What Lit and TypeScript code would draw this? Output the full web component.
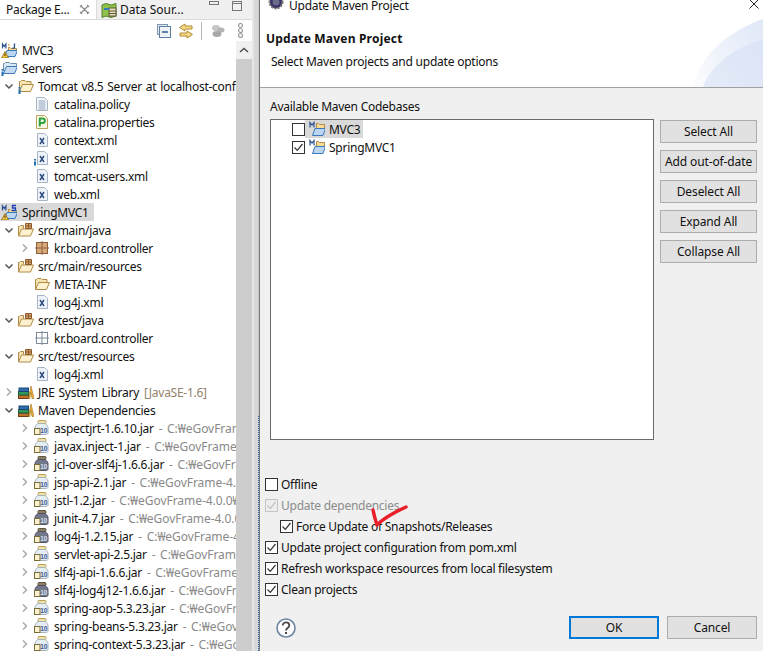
import { LitElement, html, css, svg } from "lit";
import { customElement } from "lit/decorators.js";

const folderOpen = (back = "#f6e3b4", front = "#fdf1cf", line = "#b08b45") => svg`
  <path d="M1.500 13.500V3.500h1l1-1h3.500l1 1h5v3" fill="${back}" stroke="${line}"/>
  <path d="M1.500 13.500l3-7h11l-3 7z" fill="${front}" stroke="${line}"/>`;
const warn = svg`<path d="M4 9.500l3.500 6.500H.5z" fill="#f6c945" stroke="#8d6a1a" stroke-width=".8"/><rect x="3.500" y="11.500" width="1" height="2.600" fill="#4a3500"/>`;
const info = svg`<rect x=".5" y="9" width="2" height="1.600" fill="#1f6fb5"/><rect x=".5" y="11.500" width="2" height="4.500" fill="#1f6fb5"/>`;
const xmlFile = (dec = false) => svg`
  <path d="M3.500 1.500h7l3 3v10h-10z" fill="#eef3fa" stroke="#a8b5c4"/>
  <path d="M6 6l4 6M10 6l-4 6" stroke="#2b4a7d" stroke-width="1.400" fill="none"/>
  ${dec ? svg`<rect x="0" y="9" width="2" height="1.500" fill="#1f6fb5"/><rect x="0" y="11.500" width="2" height="4" fill="#1f6fb5"/>` : ""}`;
const grid = (fill: string, line: string) => svg`
  <rect x="2.500" y="2.500" width="11" height="11" fill="${fill}" stroke="${line}"/>
  <path d="M8 1v14M1 8h14" stroke="${line}" fill="none"/>`;
const prjBase = svg`
  <path d="M7.500 11V5.500h1.500l1 1h5.500v5z" fill="#f6dc96" stroke="#b08b45"/>
  <path d="M3.500 14.500l2.500-6h10.500l-2.500 6z" fill="#bcd6f2" stroke="#3a78c0"/>
  <path d="M1.500 6.500V2l1.700 2.500L4.900 2v4.500" fill="none" stroke="#27508f" stroke-width="1.200"/>`;
const jarBody = (lid: string, lidS: string, body: string, bodyS: string, txt: string) => svg`
  <rect x="4" y=".5" width="8" height="3" rx="1" fill="${lid}" stroke="${lidS}"/>
  <path d="M4 3.500C1.500 5 1 6.500 1 8v5c0 1 1 1.500 2 1.500h9c1 0 2-.5 2-1.500V8c0-1.500-.5-3-3-4.500z" fill="${body}" stroke="${bodyS}"/>
  <rect x=".5" y="8.500" width="5.500" height="6" fill="#f9f1d0" stroke="#7a6c38"/>
  <text x="6.300" y="13.200" font-size="6.500" font-weight="700" fill="${txt}" font-family="Liberation Sans,sans-serif">10</text>`;

const icons: Record<string, any> = {
  prjJ: svg`${prjBase}<path d="M13.500 1.500v3.500c0 1-1 1.500-2.200 1" fill="none" stroke="#27508f" stroke-width="1.300"/><rect x="7" y="2" width="1.500" height="1.500" fill="#e0a040"/>${warn}`,
  prjS: svg`${prjBase}<path d="M15 1.500h-3.500v2.500h3v2.500H11" fill="none" stroke="#1a3fb8" stroke-width="1.300"/>${warn}`,
  servers: svg`
    <path d="M2.500 11V3.500h1l1-1h4l1 1h6v3" fill="#dce8f6" stroke="#6f8fae"/>
    <path d="M2.500 13.500l3-7h11l-3 7z" fill="#c5dcf4" stroke="#3f77b5"/>${info}`,
  tomcat: svg`${folderOpen()}${info}`,
  folder: folderOpen(),
  policy: svg`
    <path d="M2.500 1.500h8l3 3v10h-11z" fill="#f4f7fb" stroke="#a8b5c4"/>
    <path d="M4.500 5h7M4.500 7h7M4.500 9h7M4.500 11h7M4.500 13h7" stroke="#8fa3bb"/>`,
  props: svg`
    <path d="M2.500 1.500h8l3 3v10h-11z" fill="#fff9e6" stroke="#b9a25e"/>
    <path d="M5.800 12.500V4.500h2.800a2 2 0 010 4.500H5.800" fill="none" stroke="#2ba33f" stroke-width="2"/>`,
  xml: xmlFile(),
  xmlI: xmlFile(true),
  src: svg`
    <path d="M.5 14V4.500h1l1-1h3v3" fill="#f6e3b4" stroke="#b08b45"/>
    <path d="M.5 14l3-7h12l-3 7z" fill="#fdf1cf" stroke="#b08b45"/>
    <path d="M7.500 1.500h6v5h-6zM10.500 1v6M7 4h7" fill="#d5a26b" stroke="#8a5a2c"/>`,
  pkg: grid("#d8a878", "#8a6040"),
  pkgE: grid("#ffffff", "#7d8a99"),
  lib: svg`
    <rect x=".5" y="11" width="10" height="3.500" fill="#c0702c" stroke="#6e3e14"/>
    <rect x=".5" y="7.500" width="10" height="3.500" fill="#2f9a5c" stroke="#1e5f3a"/>
    <rect x="1" y="4" width="9.500" height="3.500" fill="#2f6fb0" stroke="#1c4470"/>
    <path d="M10.500 14.500L13 2l3 12.500h-2L12.800 8l-1 6.500z" fill="#eeb13c" stroke="#a37415" stroke-width=".6"/>`,
  jar: jarBody("#f1e2a8", "#b6a15f", "#e6edf2", "#a8b2ba", "#3a5a96"),
  jarD: jarBody("#8c8061", "#5d5640", "#72778a", "#4f5366", "#d3e2f8"),
  mvn: svg`
    <path d="M7.500 10V2.500h2l1 1h5v6z" fill="#f6dc96" stroke="#b08b45"/>
    <path d="M3.500 14.500l2.500-7h10.500l-2.500 7z" fill="#bcd6f2" stroke="#3a78c0"/>
    <path d="M1 6.500V1.500l2 2.500 2-2.500v5" fill="none" stroke="#27508f" stroke-width="1.200"/>`,
};

const icon = (name: string) =>
  html`<svg class="ic" viewBox="0 0 16 16" width="16" height="16">${icons[name]}</svg>`;

const twist = (t: string) =>
  t === "o"
    ? html`<svg class="tw" viewBox="0 0 10 10" width="10" height="10"><path d="M1.500 3.500L5 7l3.500-3.500" fill="none" stroke="#555" stroke-width="1.500"/></svg>`
    : t === "c"
      ? html`<svg class="tw" viewBox="0 0 10 10" width="10" height="10"><path d="M3 1.500L6.500 5 3 8.500" fill="none" stroke="#aaa" stroke-width="1.500"/></svg>`
      : "";

type Row = [number, string, string, string, string?, boolean?];
const jarPath = "C:₩eGovFrame-4.0.0₩bin₩maven₩repository";
const rows: Row[] = [
  [0, "", "prjJ", "MVC3"],
  [0, "", "servers", "Servers"],
  [1, "o", "tomcat", "Tomcat v8.5 Server at localhost-config"],
  [2, "", "policy", "catalina.policy"],
  [2, "", "props", "catalina.properties"],
  [2, "", "xml", "context.xml"],
  [2, "", "xmlI", "server.xml"],
  [2, "", "xml", "tomcat-users.xml"],
  [2, "", "xml", "web.xml"],
  [0, "", "prjS", "SpringMVC1", "", true],
  [1, "o", "src", "src/main/java"],
  [2, "c", "pkg", "kr.board.controller"],
  [1, "o", "src", "src/main/resources"],
  [2, "", "folder", "META-INF"],
  [2, "", "xml", "log4j.xml"],
  [1, "o", "src", "src/test/java"],
  [2, "", "pkgE", "kr.board.controller"],
  [1, "o", "src", "src/test/resources"],
  [2, "", "xml", "log4j.xml"],
  [1, "c", "lib", "JRE System Library", "[JavaSE-1.6]"],
  [1, "o", "lib", "Maven Dependencies"],
  ...[
    ["jar", "aspectjrt-1.6.10.jar"],
    ["jar", "javax.inject-1.jar"],
    ["jarD", "jcl-over-slf4j-1.6.6.jar"],
    ["jar", "jsp-api-2.1.jar"],
    ["jar", "jstl-1.2.jar"],
    ["jarD", "junit-4.7.jar"],
    ["jarD", "log4j-1.2.15.jar"],
    ["jar", "servlet-api-2.5.jar"],
    ["jar", "slf4j-api-1.6.6.jar"],
    ["jarD", "slf4j-log4j12-1.6.6.jar"],
    ["jar", "spring-aop-5.3.23.jar"],
    ["jar", "spring-beans-5.3.23.jar"],
    ["jar", "spring-context-5.3.23.jar"],
  ].map(([i, t]): Row => [2, "c", i, t, `- ${jarPath}`]),
];

const check = (on: boolean, dis = false) => html`<span class="box ${dis ? "dis" : ""}">
  ${on ? html`<svg viewBox="0 0 11 11" width="11" height="11"><path d="M1.500 5.500L4.300 8.300 9.500 2" fill="none" stroke="${dis ? "#c0c0c0" : "#333"}" stroke-width="1.200"/></svg>` : ""}
</span>`;

@customElement("app-root")
export class AppRoot extends LitElement {
  static styles = css`
    :host { display: flex; width: 763px; height: 651px; overflow: hidden; background: #f0f0f0;
      font: 12px "Noto Sans", "Noto Sans CJK KR", sans-serif; color: #111; letter-spacing: -0.26px; }
    .left { width: 252px; height: 651px; display: flex; flex-direction: column; background: #fff; flex: none; }
    .tabs { height: 19px; display: flex; background: #f0f0f0; border-bottom: 1px solid #d9d9d9; flex: none; align-items: stretch; }
    .tab { display: flex; align-items: center; white-space: nowrap; }
    .tab.on { width: 97px; background: #fff; padding-left: 6px; box-sizing: border-box; gap: 10px; border-right: 1px solid #dcdcdc; }
    .tab.off { padding-left: 4px; gap: 3px; width: 104px; box-sizing: border-box; letter-spacing: 0; }
    .winbtns { display: flex; gap: 13px; margin-left: 8px; padding-top: 1px; }
    .toolbar { height: 21px; flex: none; display: flex; align-items: center; padding-left: 157px; }
    .tgap7 { margin-left: 7px; }
    .tgap9 { margin-left: 9px; }
    .tgap12 { margin-left: 12px; }
    .main { flex: 1; display: flex; min-height: 0; }
    .tree { width: 236px; overflow: hidden; flex: none; }
    .row { height: 18px; display: flex; align-items: center; white-space: nowrap; }
    .l0 { padding-left: 1px; }
    .l1 { padding-left: 3px; word-spacing: 1px; }
    .l2 { padding-left: 19px; }
    .tws { width: 15px; flex: none; display: flex; align-items: center; padding-left: 1px; box-sizing: border-box; }
    .ic { flex: none; margin-right: 4px; }
    .l0 .ic { margin-right: 5px; }
    .sel { background: #d9d9d9; width: 93px; }
    .dim { color: #8a8a8a; margin-left: 5px; word-spacing: 1.5px; letter-spacing: -0.05px; }
    .dimb { color: #95816a; margin-left: 5px; }
    .vbar { width: 16px; background: #cdcdcd; flex: none; display: flex; flex-direction: column; }
    .up { height: 18px; background: #f0f0f0; display: flex; align-items: center; justify-content: center; }
    .sash { width: 8px; flex: none; height: 651px; background: linear-gradient(90deg, #e6e6e6 0 2px, #d8d8d8 2px 6px, #c9c9c9 6px 7px, #777 7px); position: relative; }
    .dots { position: absolute; left: 6px; top: 416px; bottom: 0; width: 1px;
      background: repeating-linear-gradient(180deg, #1f5fae 0 1px, #d8d8d8 1px 2px); }

    .dlg { flex: 1; display: flex; flex-direction: column; min-width: 0; }
    .hdr { height: 87px; background: #fff; border-bottom: 1px solid #a0a0a0; flex: none; position: relative; overflow: hidden; }
    .swirl { position: absolute; right: 0; bottom: 0; }
    .ttl { height: 11px; display: flex; align-items: center; gap: 5px; padding-left: 8px; position: relative; }
    .ttlic { margin-top: -8px; }
    .close { position: absolute; left: 489px; top: -1px; }
    .h1 { font-weight: 700; margin: 19px 0 0 6px; line-height: 17px; position: relative; letter-spacing: 0.2px; }
    .h2 { margin: 6px 0 0 11px; line-height: 17px; position: relative; letter-spacing: -0.22px; }
    .body { flex: 1; display: flex; flex-direction: column; padding: 0 6px 0 5px; position: relative; }
    .lbl { margin: 10px 0 0 5px; line-height: 17px; height: 17px; }
    .mid { display: flex; gap: 6px; margin: 4px 0 0 5px; }
    .list { width: 384px; height: 321px; box-sizing: border-box; border: 1px solid #6a6a6a; background: #fff; }
    .lrow { height: 18px; display: flex; align-items: center; padding-left: 21px; }
    .lrow .ic { margin: 0 4px 0 4px; }
    .lsel { background: #d9d9d9; display: flex; align-items: center; height: 18px; padding-right: 3px; }
    .btns { display: flex; flex-direction: column; gap: 7px; padding-top: 1px; }
    .btn { width: 97px; height: 23px; box-sizing: border-box; border: 1px solid #adadad; background: #e1e1e1;
      display: flex; align-items: center; justify-content: center; white-space: nowrap; letter-spacing: -0.12px; }
    .opts { margin-top: 34px; display: flex; flex-direction: column; }
    .opt { height: 21px; display: flex; align-items: center; gap: 3px; white-space: nowrap; }
    .opt.sub { padding-left: 15px; }
    .opt.dis { color: #8c8c8c; }
    .box { width: 13px; height: 13px; box-sizing: border-box; border: 1px solid #333; background: #fff; display: inline-flex; flex: none; align-items: center; justify-content: center; }
    .box.dis { border-color: #c4c4c4; background: #eee; }
    .foot { display: flex; align-items: center; margin-top: 16px; padding-left: 11px; }
    .foot .sp { flex: 1; }
    .foot .btn { width: 90px; margin-left: 8px; }
    .ok { border: 2px solid #0078d7 !important; }
    .mark { position: absolute; left: 110px; top: 416px; }
  `;

  render() {
    return html`
      <div class="left">
        <div class="tabs">
          <div class="tab on"><span>Package E...</span>
            <svg viewBox="0 0 11 11" width="11" height="11"><path d="M1.500 1.500l8 8M9.500 1.500l-8 8M1 3l2-2M8 1l2 2M1 8l2 2M10 8l-2 2" fill="none" stroke="#8a8a8a" stroke-width="1.200"/></svg>
          </div>
          <div class="tab off">
            <svg viewBox="0 0 16 16" width="16" height="16"><path d="M1 3l4-1.500 5 1.500 5-1.500V14l-5 1.500L5 14l-4 1.500z" fill="#8ec24a" stroke="#56802a"/><rect x="8" y="6" width="7" height="8" fill="#e8e2c0" stroke="#5a5236"/><path d="M8 9h7M8 11.500h7" stroke="#5a5236"/><path d="M3 7h5" stroke="#2a7fb8" stroke-width="2"/></svg>
            <span>Data Sour...</span>
          </div>
          <div class="winbtns">
            <svg viewBox="0 0 10 5" width="10" height="5"><rect x=".5" y=".5" width="9" height="3" fill="none" stroke="#777"/></svg>
            <svg viewBox="0 0 10 10" width="10" height="10"><rect x=".5" y=".5" width="9" height="9" fill="none" stroke="#777"/><path d="M0 2.500h10" stroke="#777"/></svg>
          </div>
        </div>
        <div class="toolbar">
          <svg viewBox="0 0 14 14" width="14" height="14"><rect x=".5" y=".5" width="10" height="10" fill="#dfe8f2" stroke="#7f97b0"/><rect x="2.500" y="2.500" width="11" height="11" fill="#eef3f8" stroke="#5f7f9f"/><path d="M5 8h6" stroke="#2f5f8f" stroke-width="1.500"/></svg>
          <svg class="tgap7" viewBox="0 0 16 16" width="16" height="16"><path d="M7 1L1.500 4.500 7 8V6h7V3H7zM9 8l5.500 3.500L9 15v-2H2v-3h7z" fill="#f4d98a" stroke="#b68a2c"/></svg>
          <svg class="tgap7" width="1" height="18"><rect width="1" height="18" fill="#b5b5b5"/></svg>
          <svg class="tgap9" viewBox="0 0 14 14" width="14" height="14"><ellipse cx="5" cy="4" rx="4" ry="3" fill="#c6c6c6"/><ellipse cx="10" cy="6" rx="3.500" ry="2.500" fill="#b4b4b4"/><ellipse cx="6" cy="10" rx="4.500" ry="3" fill="#a8a8a8"/></svg>
          <svg class="tgap12" viewBox="0 0 7 15" width="7" height="15"><g fill="none" stroke="#9a9a9a" stroke-width="1.200"><circle cx="3.500" cy="2.500" r="2"/><circle cx="3.500" cy="7.500" r="2"/><circle cx="3.500" cy="12.500" r="2"/></g></svg>
        </div>
        <div class="main">
          <div class="tree">
            ${rows.map(([lvl, t, ic, txt, extra, sel]) => html`
              <div class="row l${lvl} ${sel ? "sel" : ""}">
                ${lvl > 0 ? html`<span class="tws">${twist(t)}</span>` : ""}
                ${icon(ic)}<span>${txt}</span>
                ${extra ? html`<span class="${ic === "lib" ? "dimb" : "dim"}">${extra}</span>` : ""}
              </div>`)}
          </div>
          <div class="vbar">
            <div class="up"><svg viewBox="0 0 10 6" width="10" height="6"><path d="M1 5l4-3.500L9 5" fill="none" stroke="#505050" stroke-width="1.600"/></svg></div>
          </div>
        </div>
      </div>
      <div class="sash"><div class="dots"></div></div>
      <div class="dlg">
        <div class="hdr">
          <svg class="swirl" width="70" height="68" viewBox="0 0 70 68">
            <defs><linearGradient id="g" x1="0" y1="1" x2="1" y2="0"><stop offset="0" stop-color="#fbfcfe"/><stop offset="1" stop-color="#dfe7f7"/></linearGradient></defs>
            <path d="M1 68C4 42 30 14 70 0v68z" fill="url(#g)"/>
            <path d="M10 68C16 50 38 28 70 21v47z" fill="#d4def4" opacity=".55"/>
          </svg>
          <div class="ttl">
            <svg class="ttlic" viewBox="0 0 16 16" width="16" height="16"><circle cx="8" cy="8" r="6.500" fill="#3a2f66" stroke="#777" stroke-width="2" stroke-dasharray="2 1.200"/><circle cx="8" cy="8" r="3.500" fill="#6a6a8a"/></svg>
            <span>Update Maven Project</span>
            <svg class="close" viewBox="0 0 10 10" width="10" height="10"><path d="M.5 .5l9 9M9.500 .5l-9 9" stroke="#222" fill="none"/></svg>
          </div>
          <div class="h1">Update Maven Project</div>
          <div class="h2">Select Maven projects and update options</div>
        </div>
        <div class="body">
          <div class="lbl">Available Maven Codebases</div>
          <div class="mid">
            <div class="list">
              <div class="lrow">${check(false)}<span class="lsel">${icon("mvn")}<span>MVC3</span></span></div>
              <div class="lrow">${check(true)}${icon("mvn")}<span>SpringMVC1</span></div>
            </div>
            <div class="btns">
              ${["Select All", "Add out-of-date", "Deselect All", "Expand All", "Collapse All"].map((b) => html`<div class="btn">${b}</div>`)}
            </div>
          </div>
          <div class="opts">
            <div class="opt">${check(false)}<span>Offline</span></div>
            <div class="opt dis">${check(true, true)}<span>Update dependencies</span></div>
            <div class="opt sub">${check(true)}<span>Force Update of Snapshots/Releases</span></div>
            <div class="opt">${check(true)}<span>Update project configuration from pom.xml</span></div>
            <div class="opt">${check(true)}<span>Refresh workspace resources from local filesystem</span></div>
            <div class="opt">${check(true)}<span>Clean projects</span></div>
          </div>
          <div class="foot">
            <svg viewBox="0 0 20 20" width="20" height="20"><circle cx="10" cy="10" r="9" fill="#fdfdfe" stroke="#6b84a0" stroke-width="1.600"/><path d="M6.800 7.500c0-4.200 6.500-4 6.500 0 0 2.500-3.300 2.500-3.300 5" fill="none" stroke="#4a4a4a" stroke-width="1.800"/><rect x="9" y="14" width="2" height="2" fill="#4a4a4a"/></svg>
            <div class="sp"></div>
            <div class="btn ok">OK</div>
            <div class="btn">Cancel</div>
          </div>
          <svg class="mark" width="40" height="26" viewBox="0 0 40 26"><path d="M3 6c1 5 2 9 4 15 8-8 18-13 29-18" fill="none" stroke="#e8202a" stroke-width="3.500" stroke-linecap="round" stroke-linejoin="round"/></svg>
        </div>
      </div>
    `;
  }
}
